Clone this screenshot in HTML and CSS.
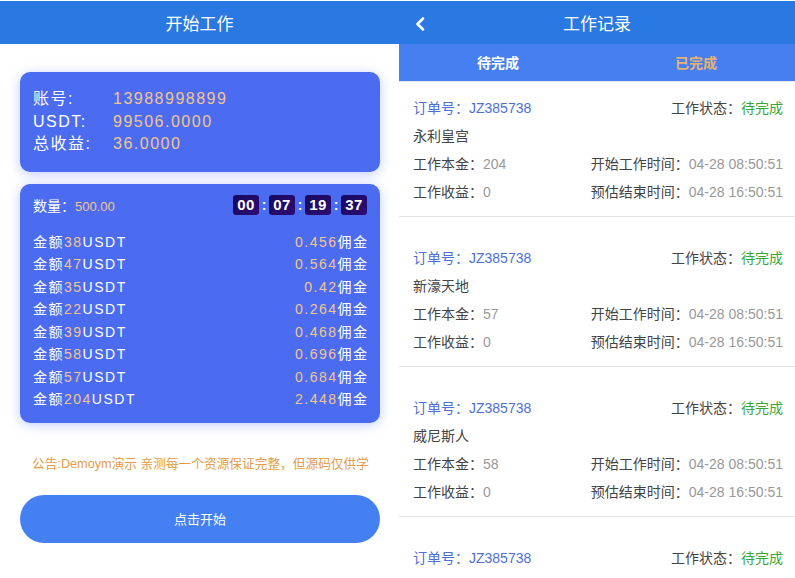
FILE: index.html
```html
<!DOCTYPE html>
<html lang="zh-CN">
<head>
<meta charset="utf-8">
<title>工作</title>
<link rel="stylesheet" href="styles.css">
</head>
<body>
<div class="screen">
  <section class="panel panel-left">
    <header class="topbar"><h1>开始工作</h1></header>

    <div class="card account">
      <div class="acct-row"><span class="k">账号:</span><span class="v">13988998899</span></div>
      <div class="acct-row"><span class="k">USDT:</span><span class="v">99506.0000</span></div>
      <div class="acct-row"><span class="k">总收益:</span><span class="v">36.0000</span></div>
    </div>

    <div class="card tasks">
      <div class="tasks-head">
        <div class="qty">数量：<span class="qty-v">500.00</span></div>
        <div class="timer">
          <span class="tbox">00</span><span class="tcolon">:</span>
          <span class="tbox">07</span><span class="tcolon">:</span>
          <span class="tbox">19</span><span class="tcolon">:</span>
          <span class="tbox">37</span>
        </div>
      </div>
      <ul class="task-list">
        <li><span>金额<em>38</em>USDT</span><span><em>0.456</em>佣金</span></li>
        <li><span>金额<em>47</em>USDT</span><span><em>0.564</em>佣金</span></li>
        <li><span>金额<em>35</em>USDT</span><span><em>0.42</em>佣金</span></li>
        <li><span>金额<em>22</em>USDT</span><span><em>0.264</em>佣金</span></li>
        <li><span>金额<em>39</em>USDT</span><span><em>0.468</em>佣金</span></li>
        <li><span>金额<em>58</em>USDT</span><span><em>0.696</em>佣金</span></li>
        <li><span>金额<em>57</em>USDT</span><span><em>0.684</em>佣金</span></li>
        <li><span>金额<em>204</em>USDT</span><span><em>2.448</em>佣金</span></li>
      </ul>
    </div>

    <p class="notice">公告:Demoym演示 亲测每一个资源保证完整，但源码仅供学</p>
    <button class="start">点击开始</button>
  </section>

  <section class="panel panel-right">
    <header class="topbar">
      <svg class="back" width="10" height="14" viewBox="0 0 10 14"><path d="M8 1.5 L2.5 7 L8 12.5" fill="none" stroke="#fff" stroke-width="2.6" stroke-linecap="round" stroke-linejoin="round"/></svg>
      <h1>工作记录</h1>
    </header>
    <nav class="tabs">
      <span class="tab tab-active">待完成</span>
      <span class="tab tab-done">已完成</span>
    </nav>
    <div class="orders">
      <div class="order">
        <div class="orow"><span class="ono">订单号：JZ385738</span><span class="lbl">工作状态：<span class="ok">待完成</span></span></div>
        <div class="orow"><span class="lbl">永利皇宫</span></div>
        <div class="orow"><span class="lbl">工作本金：<span class="val">204</span></span><span class="lbl">开始工作时间：<span class="val">04-28 08:50:51</span></span></div>
        <div class="orow"><span class="lbl">工作收益：<span class="val">0</span></span><span class="lbl">预估结束时间：<span class="val">04-28 16:50:51</span></span></div>
      </div>
      <div class="order">
        <div class="orow"><span class="ono">订单号：JZ385738</span><span class="lbl">工作状态：<span class="ok">待完成</span></span></div>
        <div class="orow"><span class="lbl">新濠天地</span></div>
        <div class="orow"><span class="lbl">工作本金：<span class="val">57</span></span><span class="lbl">开始工作时间：<span class="val">04-28 08:50:51</span></span></div>
        <div class="orow"><span class="lbl">工作收益：<span class="val">0</span></span><span class="lbl">预估结束时间：<span class="val">04-28 16:50:51</span></span></div>
      </div>
      <div class="order">
        <div class="orow"><span class="ono">订单号：JZ385738</span><span class="lbl">工作状态：<span class="ok">待完成</span></span></div>
        <div class="orow"><span class="lbl">威尼斯人</span></div>
        <div class="orow"><span class="lbl">工作本金：<span class="val">58</span></span><span class="lbl">开始工作时间：<span class="val">04-28 08:50:51</span></span></div>
        <div class="orow"><span class="lbl">工作收益：<span class="val">0</span></span><span class="lbl">预估结束时间：<span class="val">04-28 16:50:51</span></span></div>
      </div>
      <div class="order">
        <div class="orow"><span class="ono">订单号：JZ385738</span><span class="lbl">工作状态：<span class="ok">待完成</span></span></div>
      </div>
    </div>
  </section>
</div>
</body>
</html>
```

FILE: styles.css
```css
* { box-sizing: border-box; }
html, body { margin: 0; padding: 0; background: #fff; }
body {
  font-family: "Liberation Sans", "Noto Sans CJK SC", sans-serif;
  width: 795px;
  height: 578px;
  overflow: hidden;
}
.screen {
  display: grid;
  grid-template-columns: 399px 396px;
  padding-top: 1px;
  height: 578px;
}
.panel { overflow: hidden; }
.topbar {
  position: relative;
  height: 43px;
  background: #2a78e2;
  display: flex;
  align-items: center;
  justify-content: center;
}
.topbar h1 {
  margin: 0;
  font-size: 17px;
  font-weight: normal;
  color: #fff;
}
.back {
  position: absolute;
  left: 16px;
  top: 16px;
}

/* left panel */
.card {
  margin: 0 19px 0 20px;
  background: #4b6cf1;
  border-radius: 10px;
  box-shadow: 0 2px 12px rgba(75, 108, 241, 0.35);
  color: #fff;
}
.account {
  margin-top: 28px;
  padding: 16px 13px 16px;
  font-size: 16px;
  letter-spacing: 1.5px;
}
.acct-row { display: flex; line-height: 22.5px; }
.acct-row .k { width: 80px; }
.acct-row .v { color: #f3c58c; }

.tasks {
  margin-top: 12px;
  padding: 11px 13px 12px;
}
.tasks-head {
  display: flex;
  justify-content: space-between;
  align-items: center;
  height: 20px;
}
.qty { font-size: 14px; }
.qty-v { color: #f3c58c; font-size: 13px; }
.timer { display: flex; align-items: center; }
.tbox {
  width: 26px;
  height: 20px;
  border-radius: 3px;
  background: linear-gradient(135deg, #160a5e, #2e0b74);
  color: #fff;
  font-weight: bold;
  font-size: 15px;
  line-height: 20px;
  text-align: center;
  letter-spacing: 0.5px;
}
.tcolon {
  width: 10px;
  text-align: center;
  font-weight: bold;
  font-size: 14px;
  color: #fff;
}
.task-list {
  list-style: none;
  margin: 16px 0 0;
  padding: 0;
  font-size: 14px;
  letter-spacing: 1.5px;
}
.task-list li {
  display: flex;
  justify-content: space-between;
  line-height: 22.5px;
}
.task-list li span:last-child { margin-right: -1.5px; }
.task-list em { font-style: normal; color: #f3c58c; }

.notice {
  margin: 32px 28px 0 32px;
  font-size: 12.7px;
  line-height: 18px;
  color: #e39c48;
  white-space: nowrap;
}
.start {
  display: block;
  margin: 22px 19px 0 20px;
  width: 360px;
  height: 48px;
  border: none;
  border-radius: 24px;
  background: #4580f2;
  color: #fff;
  font-family: "Liberation Sans", "Noto Sans CJK SC", sans-serif;
  font-size: 13px;
}

/* right panel */
.tabs {
  display: grid;
  grid-template-columns: 1fr 1fr;
  height: 38px;
  background: #4680f0;
  border-bottom: 1px solid #e6eaf2;
}
.tab {
  display: flex;
  align-items: center;
  justify-content: center;
  font-size: 14px;
  font-weight: bold;
  padding-bottom: 2px;
}
.tab-active { color: #fff; }
.tab-done { color: #eab26e; }

.orders { font-size: 14px; }
.order {
  padding: 11px 12px 11px 14px;
  border-bottom: 1px solid #e4e4e4;
}
.order + .order { margin-top: 15px; }
.order:last-child { border-bottom: none; }
.orow {
  display: flex;
  justify-content: space-between;
  align-items: center;
  height: 28px;
}
.ono { color: #4f6fd6; }
.lbl { color: #444; }
.ok { color: #3aa63a; }
.val { color: #999; }
```
